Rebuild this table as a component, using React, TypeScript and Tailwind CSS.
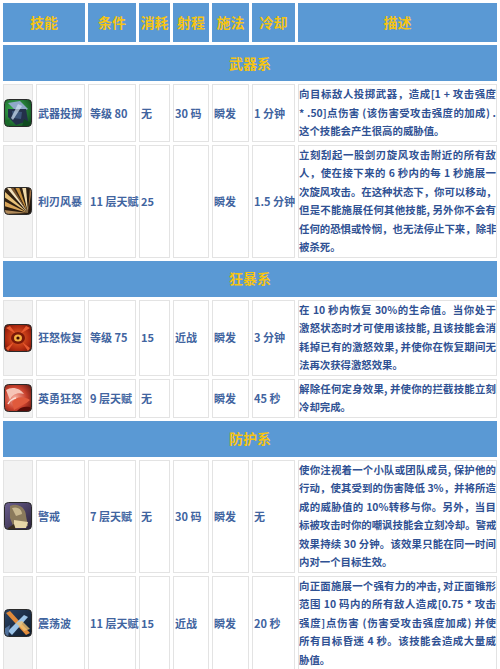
import React from 'react';

type IconKind = 'throw' | 'storm' | 'regen' | 'rage' | 'vigil' | 'shock';

function SkillIcon({ kind }: { kind: IconKind }) {
  return (
    <svg width="28" height="28" viewBox="0 0 28 28" className="block">
      <defs>
        <clipPath id={`c-${kind}`}>
          <rect x="0.5" y="0.5" width="27" height="27" rx="4" />
        </clipPath>
        <radialGradient id="g-throw" cx="0.4" cy="0.4" r="0.8">
          <stop offset="0" stopColor="#3fbf55" />
          <stop offset="1" stopColor="#0b3a18" />
        </radialGradient>
        <linearGradient id="g-storm" x1="0" y1="0" x2="1" y2="1">
          <stop offset="0" stopColor="#3a2614" />
          <stop offset="1" stopColor="#1c120a" />
        </linearGradient>
        <radialGradient id="g-regen" cx="0.5" cy="0.5" r="0.7">
          <stop offset="0" stopColor="#f06a2a" />
          <stop offset="0.6" stopColor="#b02a10" />
          <stop offset="1" stopColor="#5a0e06" />
        </radialGradient>
        <radialGradient id="g-rage" cx="0.4" cy="0.5" r="0.8">
          <stop offset="0" stopColor="#f7b0a0" />
          <stop offset="0.5" stopColor="#c8402c" />
          <stop offset="1" stopColor="#4a0c08" />
        </radialGradient>
        <linearGradient id="g-vigil" x1="0" y1="0" x2="1" y2="1">
          <stop offset="0" stopColor="#6c6090" />
          <stop offset="1" stopColor="#2a2238" />
        </linearGradient>
        <linearGradient id="g-shock" x1="0" y1="0" x2="1" y2="1">
          <stop offset="0" stopColor="#2c4466" />
          <stop offset="1" stopColor="#0e1a2a" />
        </linearGradient>
      </defs>
      <g clipPath={`url(#c-${kind})`}>
        {kind === 'throw' && (
          <>
            <rect width="28" height="28" fill="url(#g-throw)" />
            <path d="M4 4 L16 2 L24 10 L14 14 Z" fill="#8fa8c8" />
            <path d="M4 10 L22 10 L24 22 L12 26 L4 18 Z" fill="#23304a" />
            <path d="M8 12 L18 13 L17 20 L9 19 Z" fill="#3c5478" />
            <path d="M14 5 L18 7 L9 21 L7 19 Z" fill="#cfe0f0" opacity="0.7" />
            <path d="M20 20 L27 24 L27 28 L18 28 Z" fill="#0f4a20" />
            <path d="M0 22 L6 20 L4 28 L0 28 Z" fill="#1a6a2a" />
          </>
        )}
        {kind === 'storm' && (
          <>
            <rect width="28" height="28" fill="url(#g-storm)" />
            <path d="M24 26 L0 4 L0 10 Z" fill="#e8c27a" />
            <path d="M24 26 L2 0 L8 0 Z" fill="#f3e3c0" />
            <path d="M24 26 L11 0 L15 0 Z" fill="#c8903c" />
            <path d="M24 26 L18 0 L22 0 Z" fill="#f0d9a8" />
            <path d="M24 26 L0 14 L0 19 Z" fill="#d8a55a" />
            <path d="M24 26 L0 23 L0 27 Z" fill="#b08a5a" />
            <path d="M24 26 L26 0 L28 2 Z" fill="#a07040" />
            <path d="M24 26 L6 0 L9 0 Z" fill="#7a5530" />
          </>
        )}
        {kind === 'regen' && (
          <>
            <rect width="28" height="28" fill="url(#g-regen)" />
            <path d="M2 4 L12 10 L6 2 Z M26 4 L16 10 L22 2 Z M2 24 L10 18 L4 27 Z M26 24 L18 18 L24 27 Z" fill="#e85a30" />
            <ellipse cx="14" cy="14" rx="7" ry="6" fill="#7a1808" />
            <ellipse cx="14" cy="14" rx="4" ry="3.5" fill="#f5b040" />
            <circle cx="14" cy="14" r="1.6" fill="#3a0804" />
          </>
        )}
        {kind === 'rage' && (
          <>
            <rect width="28" height="28" fill="url(#g-rage)" />
            <path d="M2 6 C8 2 16 4 20 10 C14 8 8 10 6 16 Z" fill="#f6c4b6" />
            <path d="M8 18 C12 12 20 12 26 16 C22 20 16 22 10 26 Z" fill="#e05a3c" />
            <path d="M14 26 C18 22 24 22 28 24 L28 28 L12 28 Z" fill="#5a0c08" />
            <path d="M4 20 C6 16 10 14 12 14" stroke="#fbe0d6" strokeWidth="1.5" fill="none" />
          </>
        )}
        {kind === 'vigil' && (
          <>
            <rect width="28" height="28" fill="url(#g-vigil)" />
            <path d="M6 4 C14 0 22 6 22 14 L24 24 L10 26 L6 16 Z" fill="#8a7a5c" />
            <path d="M8 6 C14 4 18 8 18 12 L12 14 Z" fill="#c8b890" />
            <path d="M10 18 L24 20 L22 26 L10 26 Z" fill="#e6d6a8" />
            <path d="M4 26 L10 22 L12 28 L4 28 Z" fill="#3a2e20" />
          </>
        )}
        {kind === 'shock' && (
          <>
            <rect width="28" height="28" fill="url(#g-shock)" />
            <path d="M2 4 L6 2 L26 24 L22 26 Z" fill="#e08a3a" />
            <path d="M4 22 L20 6 L24 8 L8 26 Z" fill="#9cc4e8" />
            <path d="M12 14 L18 12 L26 20 L20 22 Z" fill="#f0c070" opacity="0.8" />
            <path d="M0 20 L6 16 L4 28 L0 28 Z" fill="#50709a" />
          </>
        )}
      </g>
      <rect x="0.5" y="0.5" width="27" height="27" rx="4" fill="none" stroke="#2a2a2a" strokeWidth="1" />
    </svg>
  );
}

type Skill = {
  icon: IconKind;
  name: string;
  req: string;
  cost: string;
  range: string;
  cast: string;
  cd: string;
  desc: string[];
  h: string;
};

type Section = { title: string; skills: Skill[] };

const sections: Section[] = [
  {
    title: '武器系',
    skills: [
      {
        icon: 'throw', name: '武器投掷', req: '等级 80', cost: '无', range: '30 码', cast: '瞬发', cd: '1 分钟', h: 'h-[57px]',
        desc: ['向目标敌人投掷武器，造成[1 + 攻击强度', '* .50]点伤害 (该伤害受攻击强度的加成) .', '这个技能会产生很高的威胁值。'],
      },
      {
        icon: 'storm', name: '利刃风暴', req: '11 层天赋', cost: '25', range: '', cast: '瞬发', cd: '1.5 分钟', h: 'h-[110px]',
        desc: [
          '立刻刮起一股剑刃旋风攻击附近的所有敌',
          '人，使在接下来的 6 秒内的每 1 秒施展一',
          '次旋风攻击。在这种状态下，你可以移动，',
          '但是不能施展任何其他技能, 另外你不会有',
          '任何的恐惧或怜悯，也无法停止下来，除非',
          '被杀死。',
        ],
      },
    ],
  },
  {
    title: '狂暴系',
    skills: [
      {
        icon: 'regen', name: '狂怒恢复', req: '等级 75', cost: '15', range: '近战', cast: '瞬发', cd: '3 分钟', h: 'h-[75px]',
        desc: [
          '在 10 秒内恢复 30%的生命值。当你处于',
          '激怒状态时才可使用该技能, 且该技能会消',
          '耗掉已有的激怒效果, 并使你在恢复期间无',
          '法再次获得激怒效果。',
        ],
      },
      {
        icon: 'rage', name: '英勇狂怒', req: '9 层天赋', cost: '无', range: '', cast: '瞬发', cd: '45 秒', h: 'h-[39px]',
        desc: ['解除任何定身效果, 并使你的拦截技能立刻', '冷却完成。'],
      },
    ],
  },
  {
    title: '防护系',
    skills: [
      {
        icon: 'vigil', name: '警戒', req: '7 层天赋', cost: '无', range: '30 码', cast: '瞬发', cd: '无', h: 'h-[111px]',
        desc: [
          '使你注视着一个小队或团队成员, 保护他的',
          '行动，使其受到的伤害降低 3%，并将所造',
          '成的威胁值的 10%转移与你。另外，当目',
          '标被攻击时你的嘲讽技能会立刻冷却。警戒',
          '效果持续 30 分钟。该效果只能在同一时间',
          '内对一个目标生效。',
        ],
      },
      {
        icon: 'shock', name: '震荡波', req: '11 层天赋', cost: '15', range: '近战', cast: '瞬发', cd: '20 秒', h: 'h-[94px]',
        desc: [
          '向正面施展一个强有力的冲击, 对正面锥形',
          '范围 10 码内的所有敌人造成[0.75 * 攻击',
          '强度]点伤害 (伤害受攻击强度加成)  并使',
          '所有目标昏迷 4 秒。该技能会造成大量威',
          '胁值。',
        ],
      },
    ],
  },
];

const headers = ['条件', '消耗', '射程', '施法', '冷却', '描述'];

export default function App() {
  const cell = 'border border-[#e3e3e3] bg-white align-middle px-[1px] whitespace-nowrap';
  return (
    <div className="w-[500px] h-[669px] bg-white overflow-hidden font-['Noto_Sans_CJK_SC','Noto_Sans',sans-serif]">
      <table className="table-fixed border-separate border-spacing-[3px] w-[500px] text-[11px] font-bold text-[#41649f]">
        <colgroup>
          <col className="w-[30px]" />
          <col className="w-[49px]" />
          <col className="w-[48px]" />
          <col className="w-[31px]" />
          <col className="w-[36px]" />
          <col className="w-[37px]" />
          <col className="w-[43px]" />
          <col className="w-[199px]" />
        </colgroup>
        <tbody>
          <tr className="h-[39px]">
            <th colSpan={2} className="bg-[#5a99d4] text-[#f6c412] text-[14px] font-bold text-center">技能</th>
            {headers.map((h) => (
              <th key={h} className="bg-[#5a99d4] text-[#f6c412] text-[14px] font-bold text-center whitespace-nowrap">{h}</th>
            ))}
          </tr>
          {sections.map((sec) => (
            <React.Fragment key={sec.title}>
              <tr className="h-[36px]">
                <td colSpan={8} className="bg-[#5a99d4] text-[#f6c412] text-[14px] font-bold text-center">{sec.title}</td>
              </tr>
              {sec.skills.map((s) => (
                <tr key={s.name} className={s.h}>
                  <td className="border border-[#e3e3e3] bg-[#f3f3f3] align-middle p-0">
                    <div className="flex justify-center">
                      <SkillIcon kind={s.icon} />
                    </div>
                  </td>
                  <td className={cell}>{s.name}</td>
                  <td className={cell}>{s.req}</td>
                  <td className={cell}>{s.cost}</td>
                  <td className={cell}>{s.range}</td>
                  <td className={cell}>{s.cast}</td>
                  <td className={cell}>{s.cd}</td>
                  <td className="border border-[#e3e3e3] bg-white align-middle px-0 text-[10.4px] text-[#2f5193] leading-[18.5px] overflow-hidden">
                    {s.desc.map((line, i) => (
                      <div
                        key={i}
                        className={
                          i === s.desc.length - 1
                            ? 'whitespace-nowrap'
                            : 'whitespace-nowrap text-justify [text-align-last:justify]'
                        }
                      >
                        {line}
                      </div>
                    ))}
                  </td>
                </tr>
              ))}
            </React.Fragment>
          ))}
        </tbody>
      </table>
    </div>
  );
}
